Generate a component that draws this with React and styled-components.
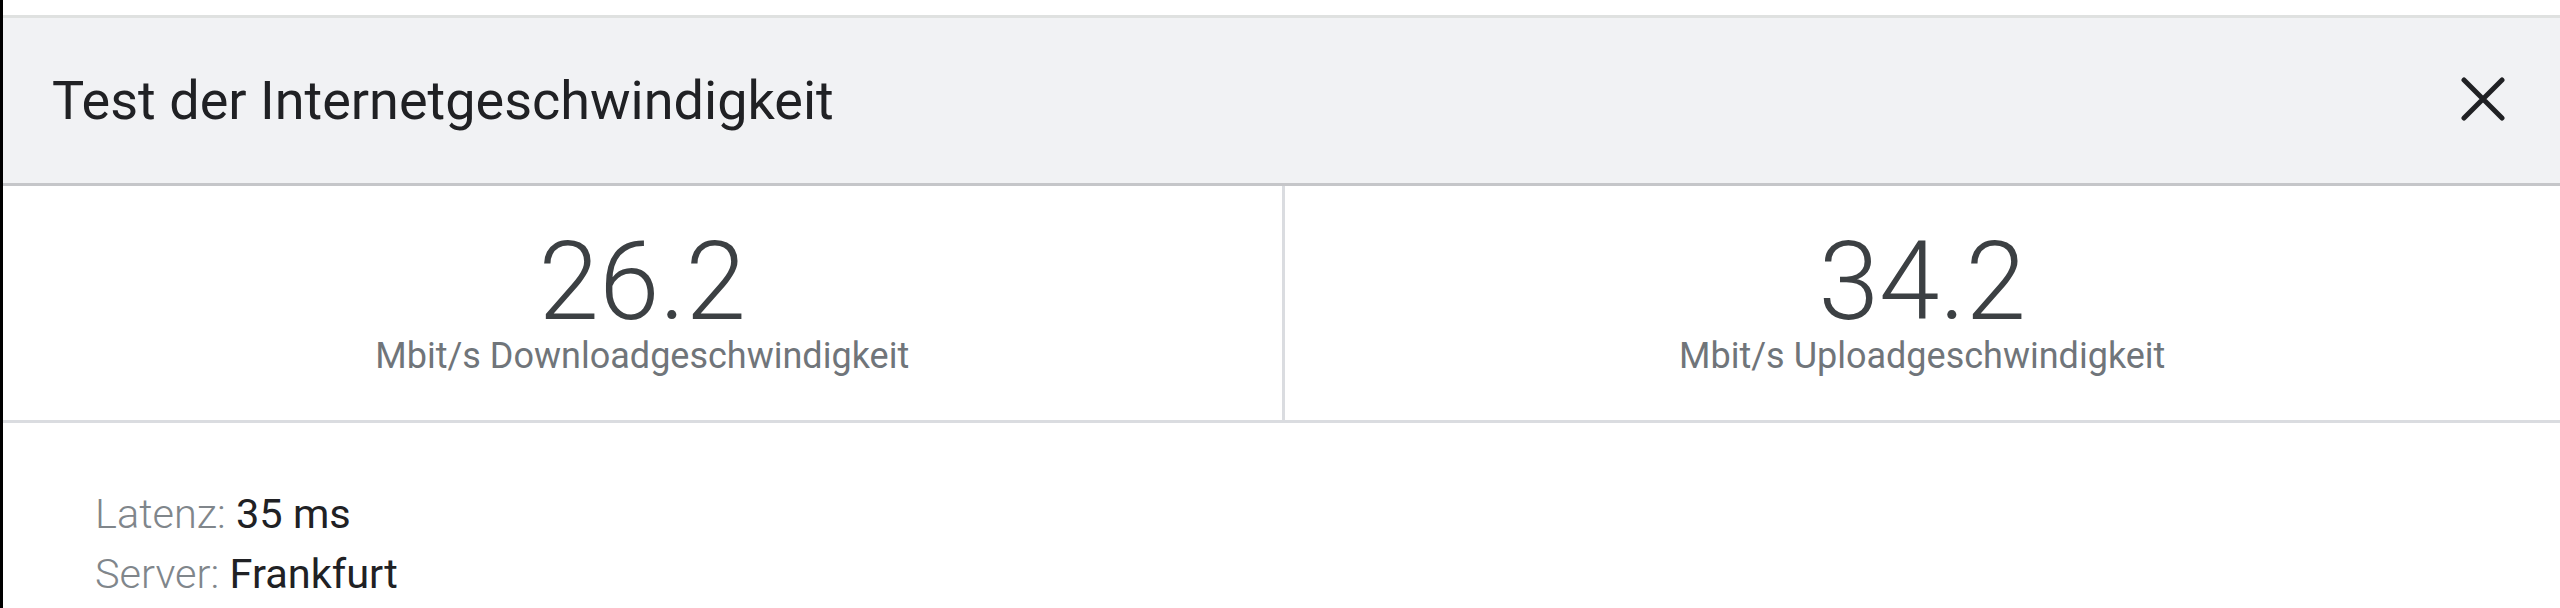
import { createGlobalStyle, styled } from 'styled-components';

const GlobalStyle = createGlobalStyle`
    html, body {
        margin: 0;
        padding: 0;
        background: #FFF;
    }
    body {
        font-family: Roboto, "Liberation Sans", Arial, sans-serif;
    }
`

const Page = styled.div`
    min-height: 100vh;
    box-sizing: border-box;
    border-left: 3px solid #000;
    padding-top: 15px;
    background: #FFF;
`

const Header = styled.header`
    display: flex;
    align-items: center;
    justify-content: space-between;
    height: 165px;
    padding: 0 55px 0 49px;
    background: #F1F2F4;
    border-top: 3px solid #DFE1E0;
    border-bottom: 3px solid #C5C6C9;
`

const Title = styled.h1`
    margin: 0;
    color: #202124;
    font-size: 54px;
    font-weight: 400;
    line-height: normal;
`

const CloseButton = styled.button`
    display: flex;
    padding: 0;
    margin-top: -4px;
    border: none;
    background: none;
    cursor: pointer;
`

const Stats = styled.div`
    display: grid;
    grid-template-columns: 1fr 1fr;
    border-bottom: 3px solid #DADCE0;
`

const StatCell = styled.div`
    display: flex;
    flex-direction: column;
    align-items: center;
    padding: 44px 0 42px;
    border-left: ${({ $divided }) => ($divided ? '3px solid #DADCE0' : 'none')};
`

const StatValue = styled.span`
    color: #3C4043;
    font-size: 109px;
    font-weight: 300;
    line-height: 104px;
`

const StatLabel = styled.span`
    color: #70757A;
    font-size: 36px;
    font-weight: 400;
    line-height: 44px;
`

const Info = styled.div`
    display: flex;
    flex-direction: column;
    padding: 61px 0 0 92px;
`

const InfoLine = styled.p`
    margin: 0;
    font-size: 41.5px;
    line-height: 60px;
`

const InfoKey = styled.span`
    color: #80868B;
    font-weight: 300;
`

const InfoValue = styled.span`
    color: #202124;
    font-weight: 400;
`

function CloseIcon() {
    return (
        <svg width="44" height="44" viewBox="0 0 44 44" fill="none">
            <path d="M3 3L41 41M41 3L3 41" stroke="#202124" strokeWidth="5" strokeLinecap="round" />
        </svg>
    )
}

const stats = [
    { value: '26.2', label: 'Mbit/s Downloadgeschwindigkeit' },
    { value: '34.2', label: 'Mbit/s Uploadgeschwindigkeit' },
]

const details = [
    { key: 'Latenz:', value: '35 ms' },
    { key: 'Server:', value: 'Frankfurt' },
]

function App() {
    return (
        <>
            <GlobalStyle />
            <Page>
                <Header>
                    <Title>Test der Internetgeschwindigkeit</Title>
                    <CloseButton aria-label="Schließen">
                        <CloseIcon />
                    </CloseButton>
                </Header>
                <Stats>
                    {stats.map((s, i) => (
                        <StatCell key={s.label} $divided={i > 0}>
                            <StatValue>{s.value}</StatValue>
                            <StatLabel>{s.label}</StatLabel>
                        </StatCell>
                    ))}
                </Stats>
                <Info>
                    {details.map((d) => (
                        <InfoLine key={d.key}>
                            <InfoKey>{d.key}</InfoKey> <InfoValue>{d.value}</InfoValue>
                        </InfoLine>
                    ))}
                </Info>
            </Page>
        </>
    );
}

export default App;
